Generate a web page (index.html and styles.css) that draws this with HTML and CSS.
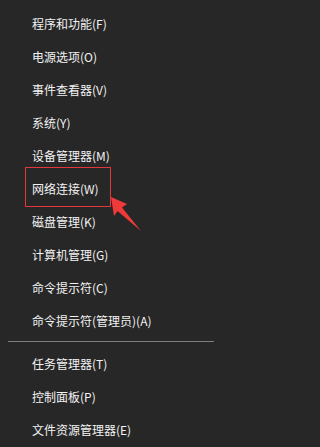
FILE: index.html
```html
<!DOCTYPE html>
<html lang="zh-CN">
<head>
<meta charset="utf-8">
<title>菜单</title>
<link rel="stylesheet" href="styles.css">
</head>
<body>
<div class="menu">
  <ul class="group group-top">
    <li class="item">程序和功能(F)</li>
    <li class="item">电源选项(O)</li>
    <li class="item">事件查看器(V)</li>
    <li class="item">系统(Y)</li>
    <li class="item">设备管理器(M)</li>
    <li class="item">网络连接(W)</li>
    <li class="item">磁盘管理(K)</li>
    <li class="item">计算机管理(G)</li>
    <li class="item">命令提示符(C)</li>
    <li class="item">命令提示符(管理员)(A)</li>
  </ul>
  <div class="separator"></div>
  <ul class="group">
    <li class="item">任务管理器(T)</li>
    <li class="item">控制面板(P)</li>
    <li class="item">文件资源管理器(E)</li>
  </ul>
  <div class="highlight-box"></div>
  <svg class="arrow" width="40" height="40" viewBox="0 0 40 40" aria-hidden="true">
    <polygon points="1,0 17,7 12,10.5 31,34 7.5,14 4,19" fill="#f03a3a"/>
  </svg>
</div>
</body>
</html>
```

FILE: styles.css
```css
html, body {
  margin: 0;
  padding: 0;
  background: #272727;
}

body {
  width: 214px;
  height: 447px;
  overflow: hidden;
  font-family: "Noto Sans CJK SC", "Noto Sans", sans-serif;
  font-size: 12px;
  color: #f2f2f2;
}

.menu {
  position: relative;
  padding-top: 7px;
}

.group {
  list-style: none;
  margin: 0;
  padding: 0;
}

.item {
  height: 33px;
  line-height: 33px;
  padding-left: 32px;
  white-space: nowrap;
}

.separator {
  height: 1px;
  background: #7d7d7d;
  margin: 4px 0 5px 8px;
}

.highlight-box {
  position: absolute;
  left: 25px;
  top: 167px;
  width: 84px;
  height: 38px;
  border: 1px solid #e2373b;
}

.arrow {
  position: absolute;
  left: 110px;
  top: 197px;
}
```
